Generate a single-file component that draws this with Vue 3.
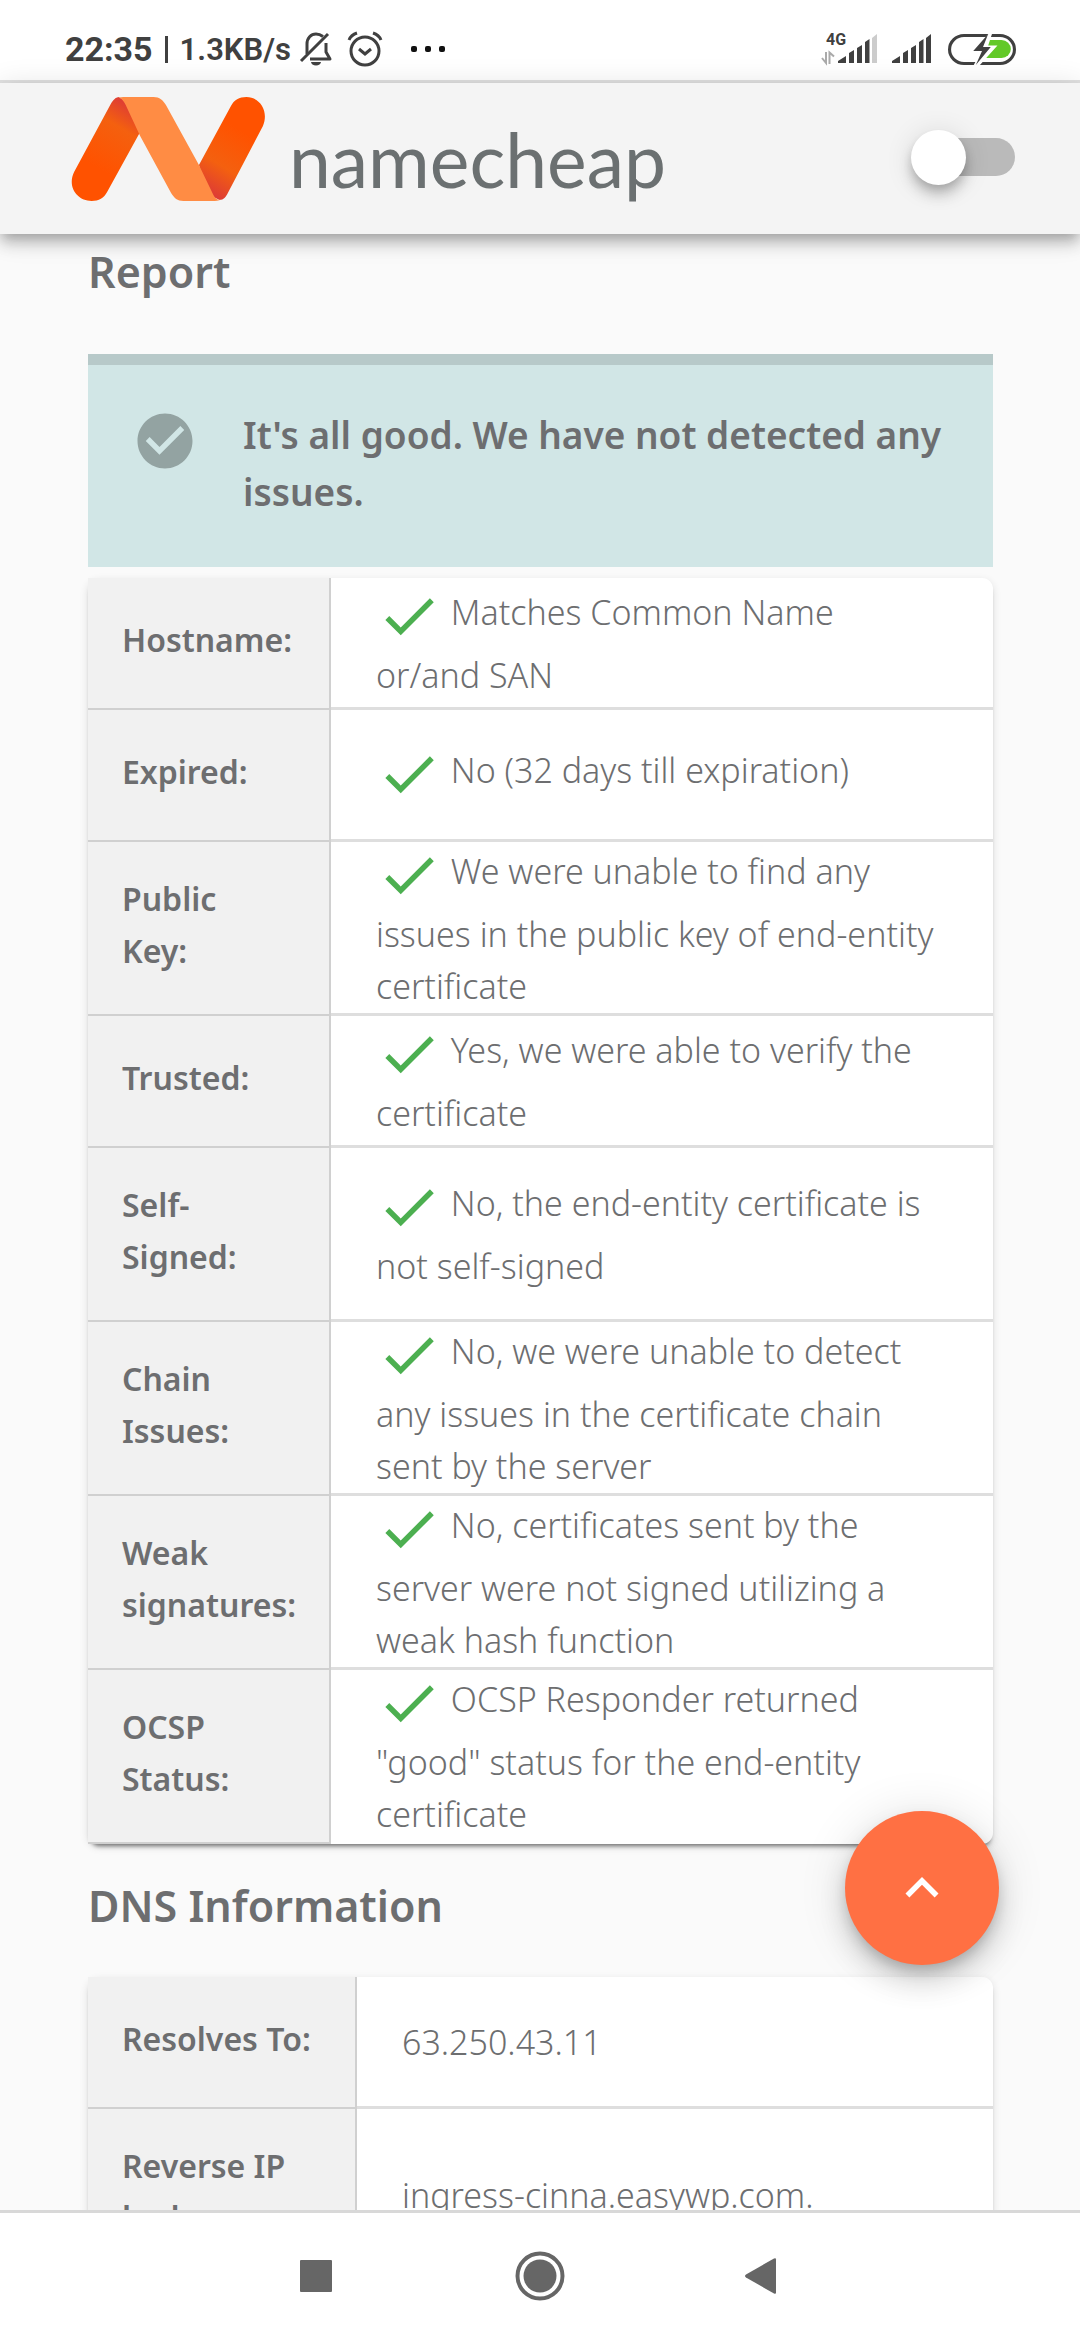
<script setup>
const report = [
  { label: 'Hostname:', value: 'Matches Common Name\nor/and SAN' },
  { label: 'Expired:', value: 'No (32 days till expiration)' },
  { label: 'Public\nKey:', value: 'We were unable to find any\nissues in the public key of end-entity\ncertificate' },
  { label: 'Trusted:', value: 'Yes, we were able to verify the\ncertificate' },
  { label: 'Self-\nSigned:', value: 'No, the end-entity certificate is\nnot self-signed' },
  { label: 'Chain\nIssues:', value: 'No, we were unable to detect\nany issues in the certificate chain\nsent by the server' },
  { label: 'Weak\nsignatures:', value: 'No, certificates sent by the\nserver were not signed utilizing a\nweak hash function' },
  { label: 'OCSP\nStatus:', value: 'OCSP Responder returned\n"good" status for the end-entity\ncertificate' },
]

const dns = [
  { label: 'Resolves To:', value: '63.250.43.11' },
  { label: 'Reverse IP\nlookup:', value: 'ingress-cinna.easywp.com.' },
]
</script>

<template>
  <div class="screen">
    <div class="status">
      <span class="clock">22:35</span>
      <span class="divider"></span>
      <span class="rate">1.3KB/s</span>
      <svg class="bell" width="34" height="36" viewBox="0 0 34 36" fill="none" stroke="#404040" stroke-width="3">
        <path d="M8 23V13C8 7 12 3 17 3c3 0 5 1 7 2.500" />
        <path d="M27 12v9l4 7H11" stroke-linejoin="round" />
        <path d="M2 30 29 3" />
        <path d="M12 31h10a5 3.500 0 0 1-10 0z" fill="#404040" stroke="none" />
      </svg>
      <svg class="alarm" width="36" height="36" viewBox="0 0 36 36" fill="none" stroke="#404040" stroke-width="3">
        <circle cx="18" cy="20" r="14" />
        <path d="m12 18 6 5 6-5" />
        <path d="M2 9q2-5 8-7M34 9q-2-5-8-7" />
      </svg>
      <svg class="dots" width="36" height="8" viewBox="0 0 36 8" fill="#111">
        <rect x="1" y="1" width="6" height="6" rx="2" />
        <rect x="15" y="1" width="6" height="6" rx="2" />
        <rect x="29" y="1" width="6" height="6" rx="2" />
      </svg>
      <div class="radios">
        <svg class="cell" width="56" height="32" viewBox="0 0 56 32" fill="#404040">
          <text x="4" y="12" class="generation">4G</text>
          <path d="M4 19v11l-4-5M7.500 31V19.500l4.500 4" fill="none" stroke="#aaa" stroke-width="2" />
          <path d="M16 30v-2l8-5v7zM27 30V20l5-3v13zM35 30V15l5-3v18zM43 30V9l4.500-3v24z" />
          <path d="M50 30V5l5-4v29z" fill="#ccc" />
        </svg>
        <svg width="40" height="32" viewBox="0 0 40 32" fill="#404040">
          <path d="M0 30v-2l8-5v7zM11 30V20l5-3v13zM19 30V15l5-3v18zM27 30V9l4.500-3v24zM34 30V5l5-4v29z" />
        </svg>
        <svg class="battery" width="68" height="32" viewBox="0 0 66 32" preserveAspectRatio="none">
          <rect x="1.500" y="2.500" width="63" height="28" rx="14" fill="none" stroke="#404040" stroke-width="3" />
          <path d="M37 7h15a9 9 0 0 1 0 18H36z" fill="#62c928" />
          <path d="M40 0 24 18.500h8L25 32h6L48 12.500h-9L43 0z" fill="#fff" />
          <path d="M39 1 24.500 18h8.500L27 32 41.500 14H34z" fill="#404040" />
        </svg>
      </div>
    </div>

    <header class="topbar">
      <a class="brand" href="#" aria-label="Home">
        <svg width="194" height="106" viewBox="0 0 188 106" preserveAspectRatio="none">
          <defs>
            <linearGradient id="leftLeg" x1="0.300" y1="1" x2="0.700" y2="0">
              <stop offset="0.300" stop-color="#ff5200" />
              <stop offset="0.750" stop-color="#f4600f" />
              <stop offset="1" stop-color="#dd3b36" />
            </linearGradient>
            <linearGradient id="rightLeg" x1="0.700" y1="0" x2="0.300" y2="1">
              <stop offset="0.300" stop-color="#ff5200" />
              <stop offset="0.700" stop-color="#f4600f" />
              <stop offset="1" stop-color="#dd3b36" />
            </linearGradient>
          </defs>
          <path d="M46 1C42 2 40 5 38 9L3 76c-7 15 3 29 17 29 7 0 12-3 15-9L67 36 58 8z" fill="url(#leftLeg)" />
          <path d="M144 104c4 0 6-3 8-7l34-67C192 15 183 1 170 1c-7 0-12 3-15 9L124 69l8 29z" fill="url(#rightLeg)" />
          <path d="M45 2c2-1 5-1 8-1h27c6 0 9 3 12 8l32 60 14 30c2 4 5 6 8 4-3 2-6 2-9 2h-28c-6 0-9-3-12-8L67 40 53 9c-2-4-5-8-8-7z" fill="#ff8c44" />
        </svg>
        <span class="wordmark">namecheap</span>
      </a>
      <input class="switch" type="checkbox" aria-label="Dark mode" />
    </header>

    <div class="body">
      <main class="content">
        <h2 class="report-title">Report</h2>
        <div class="alert" role="status">
          <svg width="66" height="66" viewBox="0 0 24 24" fill="#93a3a2">
            <path d="M12 2C6.480 2 2 6.480 2 12s4.480 10 10 10 10-4.480 10-10S17.520 2 12 2zm-2 15-5-5 1.410-1.410L10 14.170l7.590-7.590L19 8l-9 9z" />
          </svg>
          <p>It's all good. We have not detected any issues.</p>
        </div>
        <table class="card report">
          <tbody>
            <tr v-for="row in report" :key="row.label">
              <th scope="row">{{ row.label }}</th>
              <td><svg class="tick" width="66" height="66" viewBox="0 0 24 24" fill="#4caf50"><path d="M9 16.170 4.830 12l-1.420 1.410L9 19 21 7l-1.410-1.410z" /></svg> {{ row.value }}</td>
            </tr>
          </tbody>
        </table>
        <h2 class="dns-title">DNS Information</h2>
        <table class="card dns">
          <tbody>
            <tr v-for="row in dns" :key="row.label">
              <th scope="row">{{ row.label }}</th>
              <td>{{ row.value }}</td>
            </tr>
          </tbody>
        </table>
      </main>
      <button class="to-top" type="button" aria-label="Back to top">
        <svg width="66" height="66" viewBox="0 0 24 24" fill="#fff"><path d="m12 8-6 6 1.410 1.410L12 10.830l4.590 4.580L18 14z" /></svg>
      </button>
    </div>

    <nav class="keys">
      <button type="button" aria-label="Recent apps">
        <svg width="50" height="50" viewBox="0 0 50 50" fill="#666"><rect x="9" y="9" width="32" height="32" rx="1" /></svg>
      </button>
      <button type="button" aria-label="Home">
        <svg width="50" height="50" viewBox="0 0 50 50" fill="#666"><circle cx="25" cy="25" r="22.500" fill="none" stroke="#666" stroke-width="4" /><circle cx="25" cy="25" r="16.500" /></svg>
      </button>
      <button type="button" aria-label="Back">
        <svg width="50" height="50" viewBox="0 0 50 50" fill="#666"><path d="M7 23.500 35 7.500q2-1 2 1v33q0 2-2 1L7 26.500q-2-1.500 0-3z" /></svg>
      </button>
    </nav>
  </div>
</template>

<style>
body {
  margin: 0;
}
</style>

<style scoped>
.screen {
  display: flex;
  flex-direction: column;
  height: 100vh;
  background: #fafafa;
  color: #6d6e70;
  font-family: "Noto Sans", sans-serif;
  overflow: hidden;
}

.status {
  display: flex;
  flex: none;
  align-items: center;
  box-sizing: border-box;
  height: 83px;
  padding: 18px 64px 0 65px;
  border-bottom: 3px solid #e0e0e0;
  background: #fff;
  color: #404040;
  font-family: Roboto, sans-serif;
}

.clock {
  font-size: 34px;
  font-weight: 700;
}

.divider {
  width: 3px;
  height: 27px;
  margin: 0 12px;
  background: #404040;
}

.rate {
  font-size: 31px;
  font-weight: 600;
}

.bell {
  margin-left: 8px;
}

.alarm {
  margin-left: 14px;
}

.dots {
  margin-left: 27px;
}

.radios {
  display: flex;
  align-items: center;
  gap: 14px;
  margin-left: auto;
}

.cell {
  overflow: visible;
}

.battery {
  margin-left: 2px;
}

.generation {
  font-size: 16px;
  font-weight: 700;
}

.topbar {
  display: flex;
  position: relative;
  z-index: 2;
  flex: none;
  align-items: flex-start;
  justify-content: space-between;
  box-sizing: border-box;
  height: 151px;
  padding: 13px 65px 0 71px;
  background: #f4f4f4;
  box-shadow: 0 6px 11px -3px rgba(0, 0, 0, 0.2), 0 11px 14px rgba(0, 0, 0, 0.14), 0 3px 28px rgba(0, 0, 0, 0.12);
}

.brand {
  display: flex;
  gap: 24px;
  color: #6b7071;
  text-decoration: none;
}

.wordmark {
  padding-top: 15px;
  font-family: Lato, sans-serif;
  font-size: 75px;
  font-weight: 400;
  line-height: 96px;
}

.switch {
  appearance: none;
  position: relative;
  width: 94px;
  height: 38px;
  margin: 42px 0 0;
  border-radius: 19px;
  background: #bababa;
}

.switch::before {
  content: "";
  position: absolute;
  top: -8px;
  left: -10px;
  width: 55px;
  height: 55px;
  border-radius: 50%;
  background: #fff;
  box-shadow: 0 6px 11px -3px rgba(0, 0, 0, 0.2), 0 11px 14px rgba(0, 0, 0, 0.14), 0 3px 28px rgba(0, 0, 0, 0.12);
}

.body {
  display: flex;
  position: relative;
  flex: 1;
  min-height: 0;
}

.content {
  flex: 1;
  padding: 8px 87px 0 88px;
  overflow: hidden;
}

h2 {
  font-size: 43px;
  font-weight: 600;
  line-height: 60px;
}

.report-title {
  margin: 0 0 52px;
}

.dns-title {
  margin: 32px 0 41px;
}

.alert {
  display: flex;
  gap: 45px;
  margin-bottom: 11px;
  padding: 41px 44px 47px;
  border-top: 11px solid #b7c9c9;
  background: #d1e6e6;
}

.alert svg {
  flex: none;
  margin-top: 2px;
}

.alert p {
  margin: 0;
  font-size: 37px;
  font-weight: 600;
  line-height: 57px;
}

.card {
  width: 100%;
  border-spacing: 0;
  border-radius: 11px;
  background: #fff;
  box-shadow: 0 5px 4px -3px rgba(0, 0, 0, 0.5), 0 3px 8px rgba(0, 0, 0, 0.12);
  font-size: 34px;
  line-height: 52px;
  white-space: pre-line;
}

.card th {
  box-sizing: border-box;
  padding: 0 0 7px 34px;
  border-right: 2px solid #d0d0d0;
  border-bottom: 2px solid #d0d0d0;
  background: #f1f1f1;
  font-size: 32px;
  font-weight: 600;
  text-align: left;
}

.report th {
  width: 243px;
}

.dns th {
  width: 269px;
}

.card td {
  box-sizing: border-box;
  height: 132px;
  padding: 0 0 0 45px;
  border-bottom: 3px solid #dedede;
  font-weight: 300;
}

.report td {
  padding-top: 2px;
}

.card tr:last-child td {
  border-bottom-color: transparent;
}

.card tr:nth-child(3) td,
.card tr:nth-child(n + 5) td,
.dns tr:nth-child(2) td {
  height: 174px;
}

.tick {
  margin-top: -4px;
  vertical-align: -24px;
}

.to-top {
  display: flex;
  position: absolute;
  right: 81px;
  bottom: 245px;
  align-items: center;
  justify-content: center;
  width: 154px;
  height: 154px;
  padding: 0;
  border: 0;
  border-radius: 50%;
  background: #ff7043;
  box-shadow: 0 8px 14px -3px rgba(0, 0, 0, 0.2), 0 17px 28px rgba(0, 0, 0, 0.14), 0 3px 50px rgba(0, 0, 0, 0.12);
}

.keys {
  display: flex;
  position: relative;
  flex: none;
  align-items: center;
  justify-content: center;
  box-sizing: border-box;
  height: 130px;
  padding-bottom: 2px;
  border-top: 3px solid #d8d8d8;
  background: #fff;
}

.keys button {
  display: flex;
  justify-content: center;
  width: 224px;
  padding: 0;
  border: 0;
  background: none;
}
</style>
